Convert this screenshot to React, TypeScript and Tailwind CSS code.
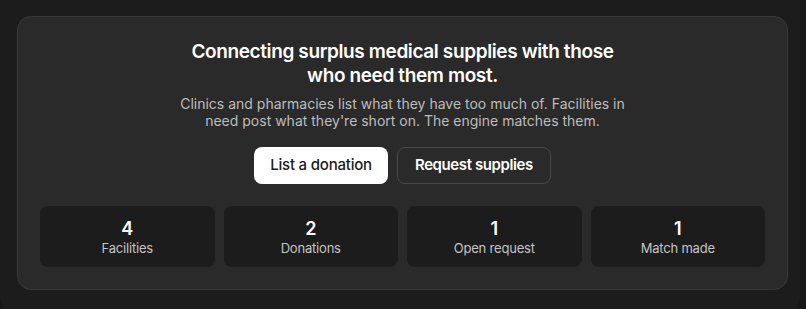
import React from "react";

const stats = [
  { n: "4", label: "Facilities" },
  { n: "2", label: "Donations" },
  { n: "1", label: "Open request" },
  { n: "1", label: "Match made" },
];

export default function App() {
  return (
    <div
      className="w-[806px] h-[309px] bg-[#171717] overflow-hidden"
      style={{ fontFamily: "Inter, 'Noto Sans', sans-serif" }}
    >
      <div className="w-[800px] h-[340px] -mt-[20px] bg-[#1c1c1c] rounded-[24px] pt-[36px] pl-[17px]">
        <div className="w-[771px] h-[274px] bg-[#2a2a2a] border border-[#393939] rounded-[14px] px-[22px] pt-[23px] flex flex-col items-center">
          <h1 className="text-[19px] leading-[24px] font-semibold text-white text-center max-w-[440px] tracking-[-0.38px]">
            Connecting surplus medical supplies with those who need them most.
          </h1>
          <p className="mt-[7px] text-[14px] leading-[17px] text-[#bdbdbd] text-center max-w-[460px]">
            Clinics and pharmacies list what they have too much of. Facilities in need post what they're short on. The engine matches them.
          </p>
          <div className="mt-[18px] flex gap-[9px]">
            <button className="h-[37px] px-[16px] rounded-[8px] bg-white text-[#1a1a1a] text-[15px] font-medium tracking-[-0.2px]">
              List a donation
            </button>
            <button className="h-[37px] px-[17px] rounded-[8px] border border-[#4a4a4a] text-white text-[15px] font-semibold tracking-[-0.4px]">
              Request supplies
            </button>
          </div>
          <div className="mt-[22px] w-full grid grid-cols-4 gap-[9px]">
            {stats.map((s) => (
              <div
                key={s.label}
                className="h-[61px] rounded-[8px] bg-[#1c1c1c] flex flex-col items-center justify-center"
              >
                <div className="text-[18px] leading-[22px] font-semibold text-white">{s.n}</div>
                <div className="text-[13px] leading-[16px] text-[#c4c4c4] tracking-[-0.2px]">{s.label}</div>
              </div>
            ))}
          </div>
        </div>
      </div>
    </div>
  );
}
